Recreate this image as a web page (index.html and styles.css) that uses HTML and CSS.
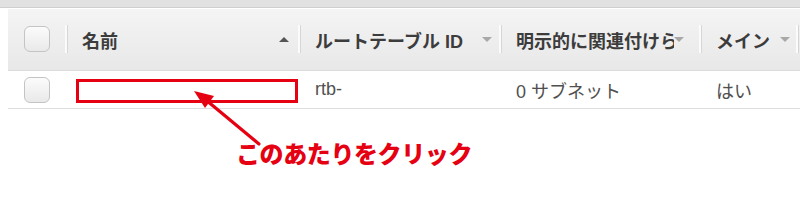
FILE: index.html
```html
<!DOCTYPE html>
<html lang="ja">
<head>
<meta charset="utf-8">
<link rel="stylesheet" href="styles.css">
</head>
<body>
<div class="topbar"></div>
<div class="table">
  <div class="head">
    <div class="cell chk"><span class="box"></span></div>
    <div class="cell c-name"><span class="label">名前</span><span class="arrow up"></span></div>
    <div class="cell c-id"><span class="label">ルートテーブル ID</span><span class="arrow down"></span></div>
    <div class="cell c-assoc"><span class="label clip">明示的に関連付けら</span><span class="arrow down tight"></span></div>
    <div class="cell c-main"><span class="label">メイン</span><span class="arrow down"></span></div>
    <div class="cell c-rest"></div>
  </div>
  <div class="row">
    <div class="cell chk"><span class="box"></span></div>
    <div class="cell c-name"><span class="redbox"></span></div>
    <div class="cell c-id">rtb-</div>
    <div class="cell c-assoc">0 サブネット</div>
    <div class="cell c-main">はい</div>
    <div class="cell c-rest"></div>
  </div>
</div>
<svg class="pointer" width="800" height="203" viewBox="0 0 800 203">
  <line x1="259" y1="144" x2="206" y2="100" stroke="#e50012" stroke-width="3.2" stroke-linecap="round"/>
  <polygon points="194,91 214,96 205,108" fill="#e50012"/>
</svg>
<div class="callout">このあたりをクリック</div>
</body>
</html>
```
FILE: styles.css
```css
html, body {
  margin: 0;
  padding: 0;
  background: #ffffff;
  width: 800px;
  height: 203px;
  overflow: hidden;
  position: relative;
  font-family: "Liberation Sans", "Noto Sans CJK JP", sans-serif;
}

.topbar {
  height: 7px;
  background: #e1e1e1;
  border-bottom: 1px solid #cfcfcf;
  margin-bottom: 1px;
}

.table {
  margin-left: 8px;
}

.head {
  display: grid;
  grid-template-columns: 58px 233px 201px 200px 98px 1fr;
  height: 61px;
  background: linear-gradient(#f4f4f4, #e8e8e8);
  border-bottom: 1px solid #dcdcdc;
  align-items: center;
}

.row {
  display: grid;
  grid-template-columns: 58px 233px 201px 200px 98px 1fr;
  height: 37px;
  border-bottom: 1px solid #dedede;
  align-items: center;
  font-size: 18px;
  color: #505050;
}

.cell {
  display: flex;
  align-items: center;
  height: 100%;
  box-sizing: border-box;
}

.head .cell {
  position: relative;
  padding-left: 16px;
  padding-right: 8px;
  font-size: 18px;
  font-weight: bold;
  color: #3c3c3c;
}

.head .cell.chk,
.row .cell.chk {
  padding-left: 16px;
}

.head .cell + .cell::before {
  content: "";
  position: absolute;
  left: -1px;
  top: 16px;
  height: 28px;
  width: 2px;
  background: #fbfbfb;
  box-shadow: 1px 0 0 #d6d6d6;
}

.head .cell.c-rest::before {
  left: -2px;
}

.row .cell {
  padding-left: 16px;
}

.row .cell.c-name {
  padding-left: 10px;
}

.box {
  width: 26px;
  height: 26px;
  box-sizing: border-box;
  border: 1px solid #c4c4c4;
  border-radius: 6px;
  background: linear-gradient(#fbfbfb, #e9e9e9);
}

.head .box {
  margin-top: -2px;
}

.label {
  flex: 1;
  white-space: nowrap;
  overflow: hidden;
}

.label.clip {
  flex: 0 0 158px;
}

.arrow {
  width: 0;
  height: 0;
  border-left: 5px solid transparent;
  border-right: 5px solid transparent;
}

.arrow.up {
  border-bottom: 5px solid #555555;
  margin-right: 2px;
}

.arrow.down {
  border-top: 5px solid #a8a8a8;
}

.arrow.tight {
  margin-left: 0;
}

.redbox {
  width: 222px;
  height: 24px;
  box-sizing: border-box;
  border: 3px solid #e50012;
  margin-top: 2px;
}

.pointer {
  position: absolute;
  left: 0;
  top: 0;
}

.callout {
  position: absolute;
  left: 236px;
  top: 135px;
  font-family: "Noto Sans CJK JP", sans-serif;
  font-size: 24px;
  font-weight: 900;
  color: #e50012;
  letter-spacing: -0.4px;
  white-space: nowrap;
}
```
